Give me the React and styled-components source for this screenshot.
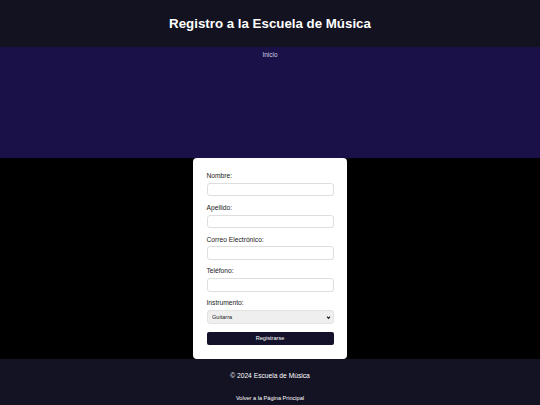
import React from "react";
import styled, { createGlobalStyle } from "styled-components";

const GlobalStyle = createGlobalStyle`
  html, body {
    margin: 0;
    padding: 0;
    background: #000;
    font-family: "Liberation Sans", Arial, sans-serif;
  }
  * {
    box-sizing: border-box;
  }
`;

const fields = [
  { id: "nombre", label: "Nombre:", type: "text" },
  { id: "apellido", label: "Apellido:", type: "text" },
  { id: "correo", label: "Correo Electrónico:", type: "email" },
  { id: "telefono", label: "Teléfono:", type: "tel" },
];

export default function App() {
  return (
    <Page>
      <GlobalStyle />
      <Header>
        <Title>Registro a la Escuela de Música</Title>
      </Header>
      <Nav>
        <NavLink href="#">Inicio</NavLink>
      </Nav>
      <Main>
        <Card>
          {fields.map((f) => (
            <Field key={f.id}>
              <Label htmlFor={f.id}>{f.label}</Label>
              <Input id={f.id} type={f.type} />
            </Field>
          ))}
          <Field>
            <Label htmlFor="instrumento">Instrumento:</Label>
            <SelectWrap>
              <Select id="instrumento" defaultValue="guitarra">
                <option value="guitarra">Guitarra</option>
                <option value="piano">Piano</option>
                <option value="violin">Violín</option>
              </Select>
              <Chevron viewBox="0 0 10 10">
                <path d="M2 3.2 L5 6.6 L8 3.2" fill="none" stroke="#222" strokeWidth="2.2" />
              </Chevron>
            </SelectWrap>
          </Field>
          <Button type="button">Registrarse</Button>
        </Card>
      </Main>
      <Footer>
        <FooterText>© 2024 Escuela de Música</FooterText>
        <FooterLink href="#">Volver a la Página Principal</FooterLink>
      </Footer>
    </Page>
  );
}

const Page = styled.div`
  display: flex;
  flex-direction: column;
  min-height: 405px;
`;

const Header = styled.header`
  height: 47px;
  background: #131220;
  display: flex;
  align-items: center;
  justify-content: center;
`;

const Title = styled.h1`
  margin: 0;
  color: #fff;
  font-size: 13.3px;
  font-weight: 700;
`;

const Nav = styled.nav`
  height: 111px;
  background: #1a1149;
  display: flex;
  justify-content: center;
  padding-top: 4px;
`;

const NavLink = styled.a`
  color: #d2cfe2;
  font-size: 6.4px;
  line-height: 8px;
  text-decoration: none;
`;

const Main = styled.main`
  background: #000;
  display: flex;
  justify-content: center;
`;

const Card = styled.form`
  width: 154px;
  background: #fff;
  border-radius: 4px;
  padding: 13.8px 13.5px 13.8px;
  display: flex;
  flex-direction: column;
`;

const Field = styled.div`
  display: flex;
  flex-direction: column;
  margin-bottom: 7.4px;
`;

const Label = styled.label`
  color: #222;
  font-size: 6.7px;
  line-height: 7.7px;
  margin-bottom: 3.2px;
`;

const Input = styled.input`
  display: block;
  height: 13.6px;
  width: 100%;
  border: 1px solid #dedede;
  border-radius: 3px;
  background: #fff;
  padding: 0 4px;
  font-size: 5.6px;
  outline: none;
`;

const SelectWrap = styled.div`
  position: relative;
  display: flex;
`;

const Select = styled.select`
  display: block;
  appearance: none;
  width: 100%;
  height: 14px;
  border: 1px solid #e2e2e2;
  border-radius: 3px;
  background: #efefef;
  padding: 0 4.5px;
  color: #222;
  font-family: "Liberation Sans", Arial, sans-serif;
  font-size: 5.6px;
  line-height: 12px;
  outline: none;
`;

const Chevron = styled.svg`
  position: absolute;
  right: 3px;
  top: 4.5px;
  width: 5px;
  height: 5px;
  pointer-events: none;
`;

const Button = styled.button`
  display: block;
  height: 13.4px;
  border: none;
  border-radius: 2px;
  background: #14122a;
  color: #fff;
  font-family: "Liberation Sans", Arial, sans-serif;
  font-size: 5.6px;
  cursor: pointer;
  padding: 0;
`;

const Footer = styled.footer`
  flex: 1;
  background: #141324;
  display: flex;
  flex-direction: column;
  align-items: center;
  padding-top: 13px;
`;

const FooterText = styled.p`
  margin: 0 0 15.5px;
  color: #fff;
  font-size: 6.7px;
  line-height: 7.7px;
`;

const FooterLink = styled.a`
  color: #fff;
  font-size: 5.6px;
  line-height: 6.4px;
  text-decoration: none;
`;
